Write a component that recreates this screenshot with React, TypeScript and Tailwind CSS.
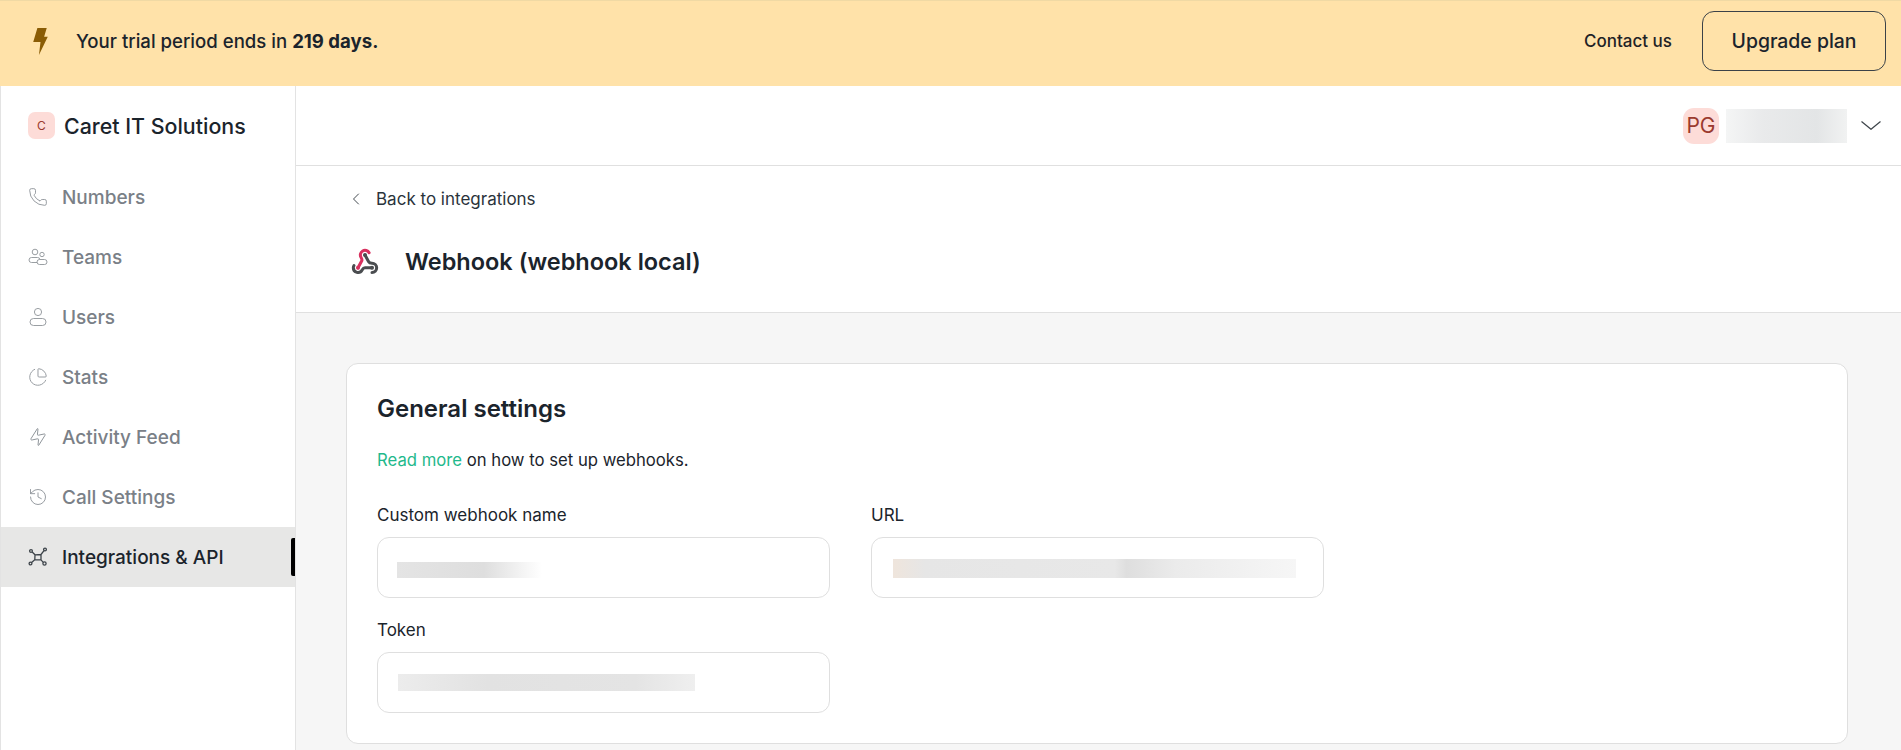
import type { ReactNode } from 'react';
import { ChevronLeft, History, PieChart, Phone, Zap } from 'lucide-react';

const FONT = "font-['Inter','Noto_Sans',sans-serif]";

function NetworkIcon({ className }: { className?: string }) {
  return (
    <svg viewBox="0 0 20 20" fill="none" stroke="currentColor" strokeWidth="1.3" className={className}>
      <circle cx="3" cy="4" r="1.4" />
      <circle cx="17" cy="2.5" r="1.4" />
      <circle cx="2.5" cy="16.5" r="1.4" />
      <circle cx="16.5" cy="16.5" r="1.6" />
      <path d="M4.2 5 7 7.8 13 7.5 16 3.6M7 7.8 6.8 12.8 3.6 15.6M13 7.5 13 12.8 15.2 15.4M6.8 12.8H13" />
    </svg>
  );
}

function TeamsIcon({ className }: { className?: string }) {
  return (
    <svg viewBox="0 0 20 20" fill="none" stroke="currentColor" strokeWidth="0.9" className={className}>
      <circle cx="7" cy="5" r="2.8" />
      <circle cx="14" cy="7.5" r="2.2" />
      <rect x="1" y="10.5" width="11" height="5" rx="2.5" />
      <rect x="9" y="12.5" width="10" height="5" rx="2.5" fill="white" />
    </svg>
  );
}

function UserIcon({ className }: { className?: string }) {
  return (
    <svg viewBox="0 0 20 20" fill="none" stroke="currentColor" strokeWidth="0.9" className={className}>
      <circle cx="10" cy="5" r="3.6" />
      <rect x="2" y="11.5" width="16" height="7" rx="3.5" />
    </svg>
  );
}

function WebhookIcon({ className }: { className?: string }) {
  return (
    <svg viewBox="0 0 24 24" fill="none" strokeWidth="2.6" strokeLinecap="round" strokeLinejoin="round" className={className}>
      <path stroke="#4a4d50" d="M18 16.98h-5.99c-1.1 0-1.95.94-2.48 1.9A4 4 0 0 1 2 17c.01-.7.2-1.4.57-2" />
      <path stroke="#d8315f" d="m6 17 3.13-5.78c.53-.97.1-2.18-.5-3.1a4 4 0 1 1 6.89-4.06" />
      <path stroke="#4a4d50" d="m12 6 3.13 5.73C15.66 12.7 16.9 13 18 13a4 4 0 0 1 0 8" />
      <circle cx="12" cy="6" r="1.7" fill="#4a4d50" stroke="none" />
      <circle cx="6" cy="17" r="1.7" fill="#d8315f" stroke="none" />
      <circle cx="18" cy="17" r="1.7" fill="#4a4d50" stroke="none" />
    </svg>
  );
}

function NavItem({ icon, label, active }: { icon: ReactNode; label: string; active?: boolean }) {
  return (
    <div
      className={`relative flex h-[60px] items-center pl-[27px] text-[19px] font-medium ${
        active ? 'bg-[#e7e7e6] text-[#1b242c]' : 'text-[#7a8087]'
      }`}
    >
      <span className={`flex w-[34px] shrink-0 items-center ${active ? 'text-[#3d444a]' : 'text-[#8e9499]'}`}>{icon}</span>
      <span className="pt-[2px]">{label}</span>
      {active && <span className="absolute right-0 top-[11px] h-[38px] w-[4px] rounded-l-[2px] bg-black" />}
    </div>
  );
}

function Field({ label, children }: { label: string; children: ReactNode }) {
  return (
    <div>
      <div className="mb-[11px] h-[22px] text-[17px] leading-[22px] text-[#1b242c]">{label}</div>
      <div className="flex h-[61px] items-center overflow-hidden rounded-[12px] border border-[#dfdfdf] bg-white">{children}</div>
    </div>
  );
}

export default function App() {
  const iconCls = 'h-[20px] w-[20px]';
  return (
    <div className={`flex h-[750px] flex-col overflow-hidden bg-white ${FONT}`}>
      <div className="flex h-[86px] shrink-0 items-center border-t border-[#f0d9a4] bg-[#ffe2a9] pb-[5px] pl-[33px] pr-[15px]">
        <svg viewBox="0 0 14 26" className="h-[27px] w-[15px]">
          <path fill="#8a5c05" d="M4 0h9l-2.5 8.5H14L5.5 26 7 13.5H0z" />
        </svg>
        <div className="ml-[28px] pt-[2px] text-[18.6px] font-medium text-[#1b242c]">
          Your trial period ends in <span className="font-bold">219 days.</span>
        </div>
        <div className="ml-auto pt-[2px] text-[17px] font-medium text-[#1f2326]">Contact us</div>
        <button className="ml-[30px] flex h-[60px] w-[184px] items-center justify-center rounded-[12px] border border-[#3b4248] pt-[2px] text-[19.4px] font-medium text-[#1b242c]">
          Upgrade plan
        </button>
      </div>

      <div className="flex min-h-0 flex-1">
        <aside className="w-[296px] shrink-0 border-x border-[#e3e3e3] bg-white">
          <div className="flex h-[79px] items-center pl-[27px]">
            <div className="flex h-[27px] w-[27px] items-center justify-center rounded-[7px] bg-[#fddcd8] text-[12px] text-[#9b3a2e]">C</div>
            <div className="ml-[9px] pt-[1px] text-[21.4px] font-medium text-[#1b242c]">Caret IT Solutions</div>
          </div>
          <nav className="pt-[2px]">
            <NavItem icon={<Phone strokeWidth={1.1} className={iconCls} />} label="Numbers" />
            <NavItem icon={<TeamsIcon className={iconCls} />} label="Teams" />
            <NavItem icon={<UserIcon className={iconCls} />} label="Users" />
            <NavItem icon={<PieChart strokeWidth={1.1} className={iconCls} />} label="Stats" />
            <NavItem icon={<Zap strokeWidth={1.1} className={`${iconCls} -rotate-12`} />} label="Activity Feed" />
            <NavItem icon={<History strokeWidth={1.1} className={iconCls} />} label="Call Settings" />
            <NavItem icon={<NetworkIcon className={iconCls} />} label="Integrations & API" active />
          </nav>
        </aside>

        <main className="flex min-w-0 flex-1 flex-col bg-[#f6f6f6]">
          <div className="flex h-[80px] shrink-0 items-center justify-end border-b border-[#e0e0e0] bg-white pr-[20px]">
            <div className="flex h-[36px] w-[36px] items-center justify-center rounded-[11px] bg-[#fddcd8] text-[21px] text-[#9b3a2e]">PG</div>
            <div className="ml-[7px] h-[34px] w-[121px] bg-[linear-gradient(90deg,#f4f5f5,#e9eaeb_30%,#e3e5e6_75%,#f1f2f2)]" />
            <svg viewBox="0 0 20 9" fill="none" stroke="#3d444a" strokeWidth="1.2" className="ml-[14px] h-[9px] w-[20px]">
              <path d="M.5.5 10 8.3 19.5.5" />
            </svg>
          </div>

          <div className="h-[147px] shrink-0 border-b border-[#e0e0e0] bg-white pl-[50px]">
            <div className="flex h-[66px] items-center text-[17px] text-[#2a333b]">
              <ChevronLeft strokeWidth={1.2} className="h-[20px] w-[20px] text-[#444b51]" />
              <span className="ml-[10px] pt-[2px]">Back to integrations</span>
            </div>
            <div className="flex h-[60px] items-center">
              <WebhookIcon className="ml-[5px] h-[28px] w-[28px]" />
              <h1 className="ml-[26px] text-[23.5px] font-semibold text-[#1b242c]">Webhook (webhook local)</h1>
            </div>
          </div>

          <div className="pl-[50px] pr-[53px] pt-[50px]">
            <section className="h-[381px] rounded-[12px] border border-[#dfdfdf] bg-white px-[30px] pt-[30px]">
              <h2 className="text-[24px] font-semibold leading-[30px] text-[#1b242c]">General settings</h2>
              <p className="mt-[24px] h-[24px] text-[16.7px] leading-[24px] text-[#1b242c]">
                <span className="text-[#1fb98c]">Read more</span> on how to set up webhooks.
              </p>
              <div className="mt-[32px] grid w-[947px] grid-cols-[453px_453px] gap-x-[41px] gap-y-[21px]">
                <Field label="Custom webhook name">
                  <div className="ml-[19px] mt-[4px] h-[16px] w-[145px] bg-[linear-gradient(90deg,#e4e4e4,#dedede_60%,#ffffff)]" />
                </Field>
                <Field label="URL">
                  <div className="ml-[21px] mt-[1px] h-[19px] w-[403px] bg-[linear-gradient(90deg,#efe5dc,#e6e6e6_8%,#e8e8e8_55%,#dedede_58%,#ebebeb_70%,#f6f6f6)]" />
                </Field>
                <Field label="Token">
                  <div className="ml-[20px] h-[17px] w-[297px] bg-[linear-gradient(90deg,#ececec,#e2e2e2_30%,#e4e4e4_80%,#efefef)]" />
                </Field>
              </div>
            </section>
          </div>
        </main>
      </div>
    </div>
  );
}
